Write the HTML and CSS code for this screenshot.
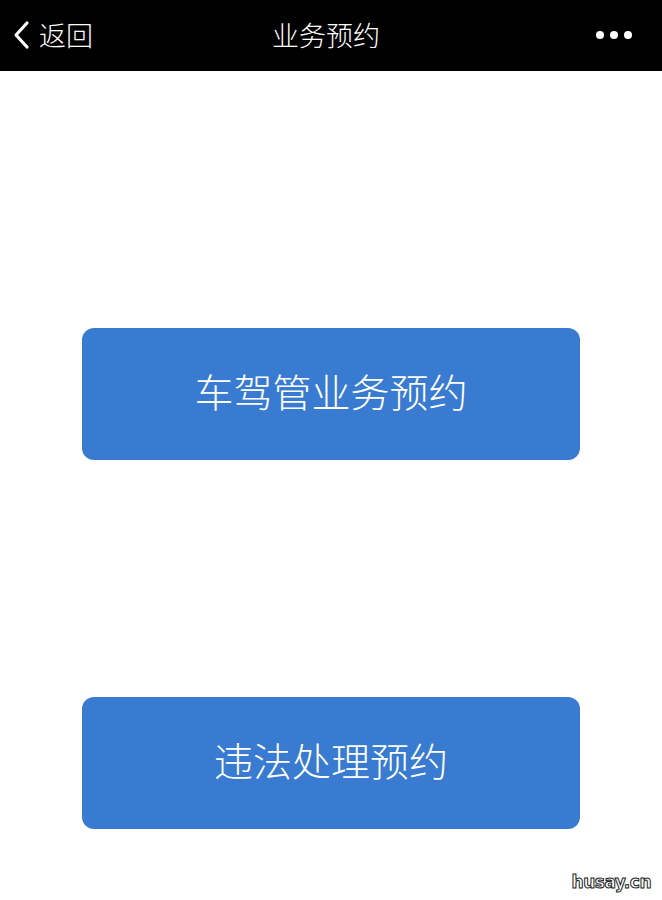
FILE: index.html
```html
<!DOCTYPE html>
<html lang="zh-CN">
<head>
<meta charset="utf-8">
<link rel="stylesheet" href="styles.css">
</head>
<body>
<header class="nav">
  <div class="nav-left">
    <svg class="chev" width="18" height="30" viewBox="0 0 18 30"><path d="M15 3 L4 15 L15 27" fill="none" stroke="#fff" stroke-width="3.2" stroke-linecap="round" stroke-linejoin="round"/></svg>
    <span class="back">返回</span>
  </div>
  <div class="nav-title">业务预约</div>
  <div class="nav-right"><span class="dot"></span><span class="dot"></span><span class="dot"></span></div>
</header>
<main class="content">
  <div class="btn"><span class="btn-label">车驾管业务预约</span></div>
  <div class="btn"><span class="btn-label">违法处理预约</span></div>
</main>
<div class="watermark">husay.cn</div>
</body>
</html>
```
FILE: styles.css
```css
html, body { margin: 0; padding: 0; background: #fff; }
body { width: 662px; height: 900px; position: relative; overflow: hidden; font-family: "Noto Sans CJK SC", "Noto Sans", sans-serif; }
.nav { height: 71px; background: #000; color: #fff; display: grid; grid-template-columns: 1fr auto 1fr; align-items: center; padding: 0 30px 2px 12px; box-sizing: border-box; }
.nav-left { display: flex; align-items: center; gap: 9px; }
.chev { display: block; }
.back { font-size: 27px; line-height: 1; font-weight: 300; }
.nav-title { font-size: 27px; line-height: 1; padding-left: 8px; font-weight: 300; }
.nav-right { display: flex; justify-content: flex-end; gap: 6px; }
.dot { width: 8px; height: 8px; border-radius: 50%; background: #fff; }
.content { display: flex; flex-direction: column; align-items: center; gap: 237px; padding-top: 257px; }
.btn { width: 498px; height: 132px; background: #387bd0; border-radius: 12px; color: #fff; display: flex; align-items: center; justify-content: center; }
.btn-label { font-size: 39px; line-height: 1; font-weight: 300; padding-bottom: 8px; }
.watermark { position: absolute; right: 11px; bottom: 8px; font-family: "DejaVu Sans", sans-serif; font-weight: bold; font-size: 17px; color: #fff; -webkit-text-stroke: 1px #222; letter-spacing: -0.5px; }
```
